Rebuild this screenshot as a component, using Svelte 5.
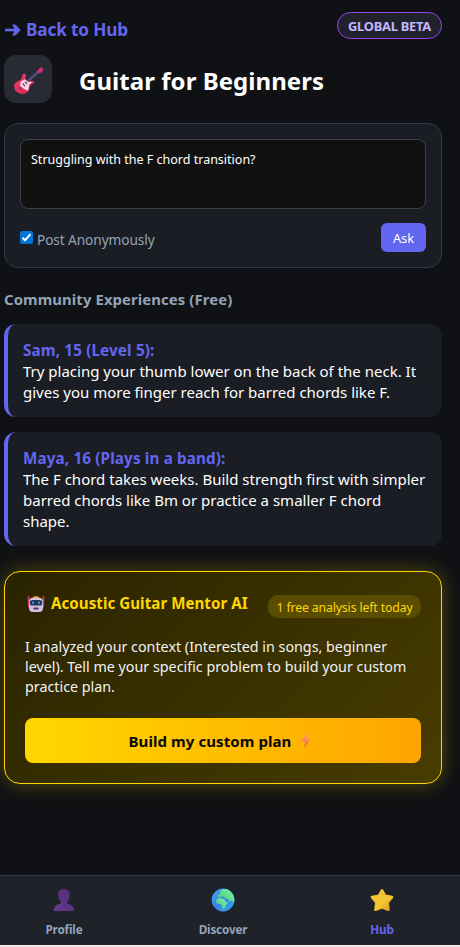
<script>
  const comments = [
    { who: 'Sam, 15 (Level 5):', lines: ['Try placing your thumb lower on the back of the neck. It', 'gives you more finger reach for barred chords like F.'] },
    { who: 'Maya, 16 (Plays in a band):', lines: ['The F chord takes weeks. Build strength first with simpler', 'barred chords like Bm or practice a smaller F chord', 'shape.'] }
  ];
  const plan = ['I analyzed your context (Interested in songs, beginner', 'level). Tell me your specific problem to build your custom', 'practice plan.'];
</script>

<div class="app">
  <main>
    <header>
      <a class="back" href="#hub">
        <svg width="17" height="12" viewBox="0 0 17 12"><path d="M1 6H13" stroke="#6366f1" stroke-width="2.6" /><path d="M8.6 .8H11.4L16.4 6L11.4 11.2H8.6L11.4 6Z" fill="#6366f1" stroke="#6366f1" stroke-width=".5" /></svg>
        <span>Back to Hub</span>
      </a>
      <span class="beta"><span>GLOBAL BETA</span></span>
    </header>

    <div class="title">
      <div class="tile">
        <svg width="32" height="32" viewBox="0 0 32 32">
          <defs><linearGradient id="gb" x1="0" y1="0" x2="1" y2="1"><stop offset="0" stop-color="#ef3b68" /><stop offset="1" stop-color="#d92550" /></linearGradient></defs>
          <path d="M14 20L27 8" stroke="#55477f" stroke-width="2.8" />
          <path d="M25.7 8.8L27.1 6.1L29.4 4.7L31 6.2L29.6 8.8L26.8 10Z" fill="#d82b82" stroke="#d82b82" stroke-linejoin="round" />
          <path d="M12.2 10.8C14.2 10.5 14.3 12.2 13.6 14.1C12.9 16.2 14.1 18.3 16 18.2L21.2 18C22.9 18.1 22.5 20 20.5 20.8C18 21.9 18.4 24 16.7 27C14.7 31.2 9 32.3 5.2 29.3C.8 25.8 1.2 20.2 5.4 18.4C9 17 9.8 15.8 10 13.5C10.1 12 10.8 11 12.2 10.8Z" fill="url(#gb)" />
          <path d="M8.8 18.4L13 16.2L16 18.9L20.6 18.8L17.2 21.8L16.2 27.8L12 26L8 22.5Z" fill="#f8d7e8" />
          <path d="M10.6 20.5L13 23M12.8 18.6L15.2 21M7.4 24.6L9.4 26.6" stroke="#554365" stroke-width="1.1" />
        </svg>
      </div>
      <h1>Guitar for Beginners</h1>
    </div>

    <section class="ask">
      <div class="input"><span>Struggling with the F chord transition?</span></div>
      <div class="askrow">
        <div class="anon">
          <svg width="13" height="13" viewBox="0 0 13 13"><rect width="13" height="13" rx="2" fill="#0075d5" /><path d="M2.5 6.8L5 9.3L10.5 3.2" fill="none" stroke="#fff" stroke-width="2" /></svg>
          <span>Post Anonymously</span>
        </div>
        <button class="askbtn">Ask</button>
      </div>
    </section>

    <h2>Community Experiences (Free)</h2>

    {#each comments as c}
      <article class="comment">
        <strong>{c.who}</strong>
        {#each c.lines as line}<div>{line}</div>{/each}
      </article>
    {/each}

    <section class="mentor">
      <div class="mhead">
        <div class="mname">
          <svg width="18" height="18" viewBox="0 0 18 18">
            <path d="M1.5 1V10M16.5 1V10" stroke="#d63c63" stroke-width="1.5" />
            <rect x="1" y="8" width="2" height="5" rx="1" fill="#b93067" /><rect x="15" y="8" width="2" height="5" rx="1" fill="#b93067" />
            <path d="M5.5 3C6 .7 12 .7 12.5 3Z" fill="#f5a51b" />
            <rect x="2" y="2.7" width="14" height="14.3" rx="4" fill="#d6bfe0" />
            <rect x="2.8" y="5" width="12.4" height="5.6" rx="2.6" fill="#24345a" />
            <rect x="4.9" y="6.6" width="2.2" height="2.4" rx="1" fill="#3c92d2" /><rect x="10.9" y="6.6" width="2.2" height="2.4" rx="1" fill="#3c92d2" />
            <rect x="6.3" y="12.6" width="5.4" height="2" rx="1" fill="#4d3b5f" />
          </svg>
          <h3>Acoustic Guitar Mentor AI</h3>
        </div>
        <span class="quota"><span>1 free analysis left today</span></span>
      </div>
      <div class="mtext">{#each plan as line}<div>{line}</div>{/each}</div>
      <button class="build">
        <span>Build my custom plan</span>
        <svg width="10" height="16" viewBox="0 0 10 16"><defs><linearGradient id="bo" x1="0" y1="0" x2="0" y2="1"><stop offset="0" stop-color="#f7a06f" /><stop offset="1" stop-color="#fa6540" /></linearGradient></defs><path d="M5.4 .3L.4 8.3L3.8 9L3.4 15.5L9.6 6.6L5.8 6.1Z" fill="url(#bo)" /></svg>
      </button>
    </section>
  </main>

  <nav>
    <div class="tab">
      <svg width="24" height="24" viewBox="0 0 24 24"><defs><linearGradient id="pu" x1="1" y1="0" x2="0" y2="1"><stop offset="0" stop-color="#4b2b75" /><stop offset="1" stop-color="#663c8e" /></linearGradient></defs><path d="M12 1C16 1 18.2 3.3 17.8 7.6C17.4 11 16 14.3 12 14.3C8 14.3 6.6 11 6.2 7.6C5.8 3.3 8 1 12 1ZM9 13H15V15.6C19.5 16 22 18.8 22.4 23H1.6C2 18.8 4.5 16 9 15.6Z" fill="url(#pu)" /></svg>
      <span>Profile</span>
    </div>
    <div class="tab">
      <svg width="24" height="24" viewBox="0 0 24 24"><defs><linearGradient id="gl" x1="0" y1="0" x2="1" y2="1"><stop offset="0" stop-color="#4ba6f4" /><stop offset=".5" stop-color="#3a7fe9" /><stop offset="1" stop-color="#25b4f3" /></linearGradient><linearGradient id="ld" x1="1" y1="0" x2="0" y2="1"><stop offset="0" stop-color="#78fbb8" /><stop offset="1" stop-color="#48bd65" /></linearGradient><clipPath id="gc"><circle cx="12" cy="12" r="11.4" /></clipPath></defs>
        <g clip-path="url(#gc)"><rect width="24" height="24" fill="url(#gl)" />
          <path d="M5 12.5L6.8 10.6L10 10.2L13.2 11.3L15 14L17 14.3L15 17L14 19.7L11.8 21.5L10.5 18L10 16L6.5 15.7L4.8 14Z" fill="url(#ld)" />
          <path d="M6.5 9.4L7 7L8.8 6L9 3.5L12 1L18 .8L24 5V14L22.2 15L20.8 12.2L19 14L17.2 11.2L14.4 10.6L13 9.1L10.8 8.4L9.4 9.4Z" fill="url(#ld)" />
        </g></svg>
      <span>Discover</span>
    </div>
    <div class="tab on">
      <svg width="24" height="24" viewBox="0 0 24 24"><defs><linearGradient id="st" x1="0" y1="0" x2="1" y2="1"><stop offset="0" stop-color="#f2c332" /><stop offset=".6" stop-color="#f4c52e" /><stop offset="1" stop-color="#d99525" /></linearGradient></defs><path d="M12 2.3L15.1 7.9L22 9.1L17.6 14.4L18.5 21.7L12 19.2L5.5 21.7L6.4 14.4L2 9.1L8.9 7.9Z" fill="url(#st)" stroke="url(#st)" stroke-width="2.6" stroke-linejoin="round" /></svg>
      <span>Hub</span>
    </div>
  </nav>
</div>

<style>
  :global(body) { background: #f3eeee; }
  * { box-sizing: border-box; }
  .app { height: 947px; border-bottom: 2px solid #efe9ea; background: #0f1114; display: flex; flex-direction: column; font-family: "Noto Sans", "Open Sans", sans-serif; color: #fff; white-space: nowrap; overflow: hidden; }
  svg { display: block; flex: none; }
  main { flex: 1; width: 438px; margin-left: 4px; padding-top: 12px; }
  h1, h2, h3 { margin: 0; }
  button { border: 0; padding: 0; font-family: inherit; }
  header { display: flex; justify-content: space-between; height: 27px; }
  .back { display: flex; align-items: center; gap: 5px; color: #6366f1; text-decoration: none; font-weight: 700; font-size: 17.2px; letter-spacing: -.15px; height: 35px; }
  .beta { display: flex; align-items: center; justify-content: center; width: 105px; height: 27px; border: 1px solid #9844e8; border-radius: 14px; background: #1f222a; color: #c4b5fd; font-size: 12.9px; font-weight: 700; letter-spacing: -.25px; }
  .title { display: flex; align-items: center; gap: 27px; margin-top: 16px; height: 48px; }
  .tile { display: flex; align-items: center; justify-content: center; width: 48px; height: 48px; border-radius: 12px; background: #282b33; }
  h1 { font-size: 24px; font-weight: 700; line-height: 48px; padding-top: 3px; letter-spacing: .05px; }
  .ask { margin-top: 20px; height: 145px; border: 1px solid #2b3a4f; border-radius: 14px; background: #1a1d23; padding: 15px; }
  .input { height: 70px; border: 1px solid #3d3f42; border-radius: 8px; background: #111; padding: 10px; font-size: 12.5px; line-height: 20px; }
  .askrow { display: flex; justify-content: space-between; align-items: center; margin-top: 14px; height: 29px; }
  .anon { display: flex; align-items: center; gap: 4px; color: #94a3b8; font-size: 13.7px; letter-spacing: -.1px; }
  .anon span { padding-top: 3px; }
  .askbtn { width: 45px; height: 29px; padding-top: 1px; border-radius: 6px; background: #6366f1; color: #fff; font-size: 12.8px; }
  h2 { margin-top: 21px; height: 20px; line-height: 20px; color: #94a3b8; font-size: 14.9px; font-weight: 700; letter-spacing: .09px; }
  .comment { margin-top: 15px; border-left: 4px solid #6366f1; border-radius: 12px; background: #1a1d23; padding: 16px 15px 14px; font-size: 15px; line-height: 21px; }
  .comment strong { display: block; color: #6366f1; font-weight: 700; font-size: 15.2px; letter-spacing: .16px; }
  .mentor { margin-top: 25px; height: 213px; border: 1px solid #ffd700; border-radius: 16px; padding: 20px; background: linear-gradient(135deg, #2a2300, #483d00); box-shadow: 0 0 20px rgba(255, 215, 0, .3); }
  .mhead { display: flex; justify-content: space-between; align-items: flex-start; height: 45px; }
  .mname { display: flex; align-items: center; gap: 6px; padding-left: 2px; height: 23px; }
  h3 { color: #ffd700; font-size: 15.1px; font-weight: 700; line-height: 22px; height: 23px; letter-spacing: .05px; }
  .quota { display: flex; align-items: center; justify-content: center; width: 153px; height: 23px; margin-top: 3px; border-radius: 10px; background: #5a4d03; color: #ffd700; font-size: 12.3px; letter-spacing: -.15px; }
  .quota span { padding-top: 1px; }
  .mtext { height: 81px; color: #f2f2f2; font-size: 14.3px; line-height: 20px; }
  .build { display: flex; align-items: center; justify-content: center; gap: 10px; width: 396px; height: 45px; padding-right: 6px; border-radius: 8px; background: linear-gradient(90deg, #ffd700, #ffa500); color: #080808; font-size: 15px; font-weight: 700; letter-spacing: .08px; }
  nav { display: flex; justify-content: space-between; height: 70px; border-top: 1px solid #2b3a4f; background: #1f2229; padding: 0 48px 0 34px; }
  .tab { display: flex; flex-direction: column; align-items: center; gap: 9px; width: 60px; padding-top: 12px; color: #94a3b8; font-size: 11.7px; line-height: 17px; font-weight: 700; letter-spacing: -.15px; }
  .tab.on { color: #6366f1; }
</style>
